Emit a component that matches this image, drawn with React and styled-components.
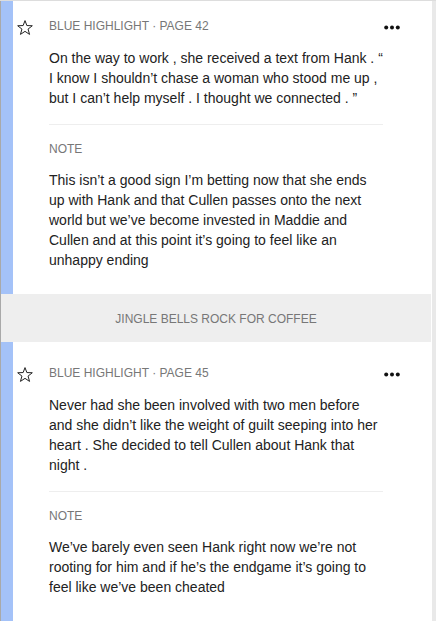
import React from "react";
import styled, { createGlobalStyle } from "styled-components";

const GlobalStyle = createGlobalStyle`
  html, body { margin: 0; padding: 0; background: #ffffff; }
  body { font-family: "Liberation Sans", Arial, sans-serif; }
  * { box-sizing: border-box; }
`;

const Viewport = styled.div`
  display: flex;
  height: 621px;
  overflow: hidden;
  border-top: 1px solid #dddddd;
`;

const List = styled.div`
  width: 431px;
  flex: none;
  border-left: 1px solid #a9a9a9;
  display: flex;
  flex-direction: column;
  margin-top: -6px;
`;

const Track = styled.div`
  width: 4px;
  margin-left: 1px;
  background: #e9e9e9;
  flex: none;
`;

const Card = styled.div`
  display: grid;
  grid-template-columns: 12px 36px 334px 48px;
  background: #ffffff;
`;

const Bar = styled.div`
  background: #a4c2f8;
`;

const StarCol = styled.div`
  padding: 25px 0 0 4px;
  & > svg { display: block; }
`;

const Main = styled.div`
  padding: 20px 0 24px;
  display: flex;
  flex-direction: column;
`;

const MenuCol = styled.div`
  padding: 30px 0 0 1px;
  & > svg { display: block; }
`;

const Label = styled.div`
  font-size: 12px;
  line-height: 18px;
  color: #777777;
  text-transform: uppercase;
  margin-top: ${(p) => p.$gap || 0}px;
`;

const Text = styled.p`
  margin: ${(p) => p.$gap}px 0 0;
  font-size: 14px;
  line-height: 20px;
  color: #222222;
`;

const Rule = styled.hr`
  border: 0;
  height: 1px;
  background: #eeeeee;
  margin: 16px 0 0;
`;

const Section = styled.div`
  height: 49px;
  background: #eeeeee;
  display: flex;
  align-items: center;
  justify-content: center;
  font-size: 12px;
  color: #777777;
  text-transform: uppercase;
  padding-top: 1px;
`;

const Star = () => (
  <svg width="16" height="15" viewBox="0 0 16 15">
    <path
      d="M8 0.6 L9.85 5.55 L15.3 5.75 L11.05 9.1 L12.55 14.4 L8 11.35 L3.45 14.4 L4.95 9.1 L0.7 5.75 L6.15 5.55 Z"
      fill="none"
      stroke="#222"
      strokeWidth="1"
      strokeLinejoin="miter"
    />
  </svg>
);

const Dots = () => (
  <svg width="16" height="5" viewBox="0 0 16 5">
    <circle cx="2.2" cy="2.5" r="2" fill="#111" />
    <circle cx="8" cy="2.5" r="2" fill="#111" />
    <circle cx="13.8" cy="2.5" r="2" fill="#111" />
  </svg>
);

const Highlight = ({ page, text, note }) => (
  <Card>
    <Bar />
    <StarCol>
      <Star />
    </StarCol>
    <Main>
      <Label $gap={2}>Blue highlight · Page {page}</Label>
      <Text $gap={13}>{text}</Text>
      <Rule />
      <Label $gap={15}>Note</Label>
      <Text $gap={12}>{note}</Text>
    </Main>
    <MenuCol>
      <Dots />
    </MenuCol>
  </Card>
);

export default function App() {
  return (
    <>
      <GlobalStyle />
      <Viewport>
        <List>
          <Highlight
            page={42}
            text="On the way to work , she received a text from Hank . “ I know I shouldn’t chase a woman who stood me up , but I can’t help myself . I thought we connected . ”"
            note="This isn’t a good sign I’m betting now that she ends up with Hank and that Cullen passes onto the next world but we’ve become invested in Maddie and Cullen and at this point it’s going to feel like an unhappy ending"
          />
          <Section>Jingle Bells Rock for Coffee</Section>
          <Highlight
            page={45}
            text="Never had she been involved with two men before and she didn’t like the weight of guilt seeping into her heart . She decided to tell Cullen about Hank that night ."
            note="We’ve barely even seen Hank right now we’re not rooting for him and if he’s the endgame it’s going to feel like we’ve been cheated"
          />
        </List>
        <Track />
      </Viewport>
    </>
  );
}
